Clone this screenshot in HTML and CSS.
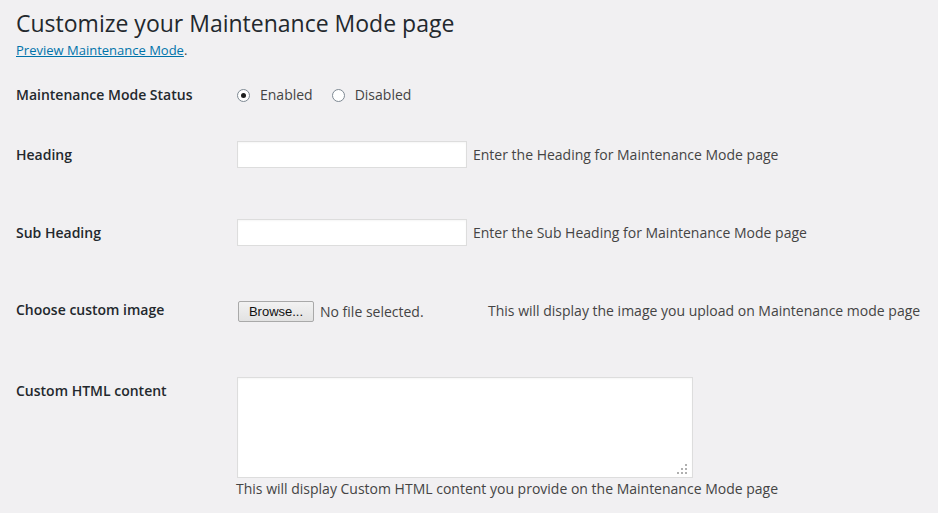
FILE: index.html
```html
<!DOCTYPE html>
<html lang="en">
<head>
<meta charset="utf-8">
<title>Customize your Maintenance Mode page</title>
<link rel="stylesheet" href="styles.css">
</head>
<body>
<div class="wrap">
  <h1 class="title">Customize your Maintenance Mode page</h1>
  <p class="preview"><a href="#">Preview Maintenance Mode</a>.</p>

  <div class="form">
    <div class="row row-status">
      <div class="label">Maintenance Mode Status</div>
      <div class="field radios">
        <label class="radio"><span class="dot checked"></span>Enabled</label>
        <label class="radio"><span class="dot"></span>Disabled</label>
      </div>
    </div>

    <div class="row row-heading">
      <div class="label lbl-input">Heading</div>
      <div class="field inline">
        <input class="text" type="text">
        <span class="desc">Enter the Heading for Maintenance Mode page</span>
      </div>
    </div>

    <div class="row row-sub">
      <div class="label lbl-input">Sub Heading</div>
      <div class="field inline">
        <input class="text" type="text">
        <span class="desc">Enter the Sub Heading for Maintenance Mode page</span>
      </div>
    </div>

    <div class="row row-image">
      <div class="label">Choose custom image</div>
      <div class="field inline file-field">
        <div class="file">
          <span class="browse">Browse...</span>
          <span class="nofile">No file selected.</span>
        </div>
        <span class="desc">This will display the image you upload on Maintenance mode page</span>
      </div>
    </div>

    <div class="row row-custom">
      <div class="label lbl-area">Custom HTML content</div>
      <div class="field">
        <div class="area-wrap">
          <textarea class="area"></textarea>
          <svg class="grip" width="14" height="12" viewBox="0 0 14 12">
            <rect x="11" y="1" width="2" height="2"/>
            <rect x="11" y="5" width="2" height="2"/>
            <rect x="7" y="5" width="2" height="2"/>
            <rect x="11" y="9" width="2" height="2"/>
            <rect x="7" y="9" width="2" height="2"/>
            <rect x="3" y="9" width="2" height="2"/>
          </svg>
        </div>
        <p class="desc below">This will display Custom HTML content you provide on the Maintenance Mode page</p>
      </div>
    </div>
  </div>
</div>
</body>
</html>
```

FILE: styles.css
```css
html, body {
  margin: 0;
  padding: 0;
  background: #f1f0f2;
}
body {
  font-family: "Open Sans", "Noto Sans", sans-serif;
  font-size: 14px;
  color: #444;
}
.wrap {
  padding: 9px 0 0 16px;
}
.title {
  margin: 0;
  font-size: 23px;
  font-weight: 400;
  line-height: 29px;
  color: #23282d;
}
.preview {
  margin: 3px 0 0;
  font-size: 13px;
  line-height: 18px;
  color: #444;
}
.preview a {
  color: #0073aa;
  text-decoration: underline;
}
.row {
  display: flex;
  align-items: flex-start;
}
.label {
  width: 221px;
  flex: none;
  font-weight: 600;
  color: #23282d;
  line-height: 20px;
}
.row-status { margin-top: 26px; }
.row-heading { margin-top: 36px; }
.row-sub { margin-top: 51px; }
.row-image { margin-top: 54px; }
.row-custom { margin-top: 55px; }

.lbl-input { padding-top: 4px; }
.lbl-area { padding-top: 4px; }

.radios {
  display: flex;
  gap: 19px;
  line-height: 20px;
}
.radio {
  display: flex;
  align-items: center;
  color: #444;
}
.dot {
  width: 11px;
  height: 11px;
  border: 1px solid #7e8993;
  border-radius: 50%;
  background: #fff;
  margin-right: 10px;
  position: relative;
  box-sizing: content-box;
}
.dot.checked::after {
  content: "";
  position: absolute;
  left: 3px;
  top: 3px;
  width: 5px;
  height: 5px;
  border-radius: 50%;
  background: #1e1e1e;
}
.inline {
  display: flex;
  align-items: center;
}
.text {
  width: 230px;
  height: 27px;
  box-sizing: border-box;
  border: 1px solid #ddd;
  background: #fff;
  box-shadow: inset 0 1px 2px rgba(0,0,0,.04);
  margin: 0 6px 0 0;
  padding: 0 5px;
  font: inherit;
}
.desc {
  color: #444;
  line-height: 20px;
}
.file {
  width: 250px;
  display: flex;
  align-items: center;
  padding-left: 1px;
}
.browse {
  display: inline-block;
  box-sizing: border-box;
  width: 76px;
  height: 21px;
  margin-top: 1px;
  border: 1px solid #a9a9a9;
  border-radius: 2px;
  background: linear-gradient(#f2f2f2, #e2e2e2);
  font-family: "Liberation Sans", Arial, sans-serif;
  font-size: 13px;
  line-height: 19px;
  text-align: center;
  color: #111;
}
.nofile {
  margin-left: 6px;
  margin-top: 2px;
  line-height: 20px;
  color: #444;
}
.area-wrap {
  position: relative;
  width: 456px;
  height: 101px;
}
.area {
  display: block;
  width: 456px;
  height: 101px;
  box-sizing: border-box;
  border: 1px solid #ddd;
  background: #fff;
  box-shadow: inset 0 1px 2px rgba(0,0,0,.04);
  resize: none;
  margin: 0;
}
.grip {
  position: absolute;
  right: 5px;
  bottom: 3px;
  fill: #b0b0b0;
}
.below {
  margin: 1px 0 0 -1px;
}
```
